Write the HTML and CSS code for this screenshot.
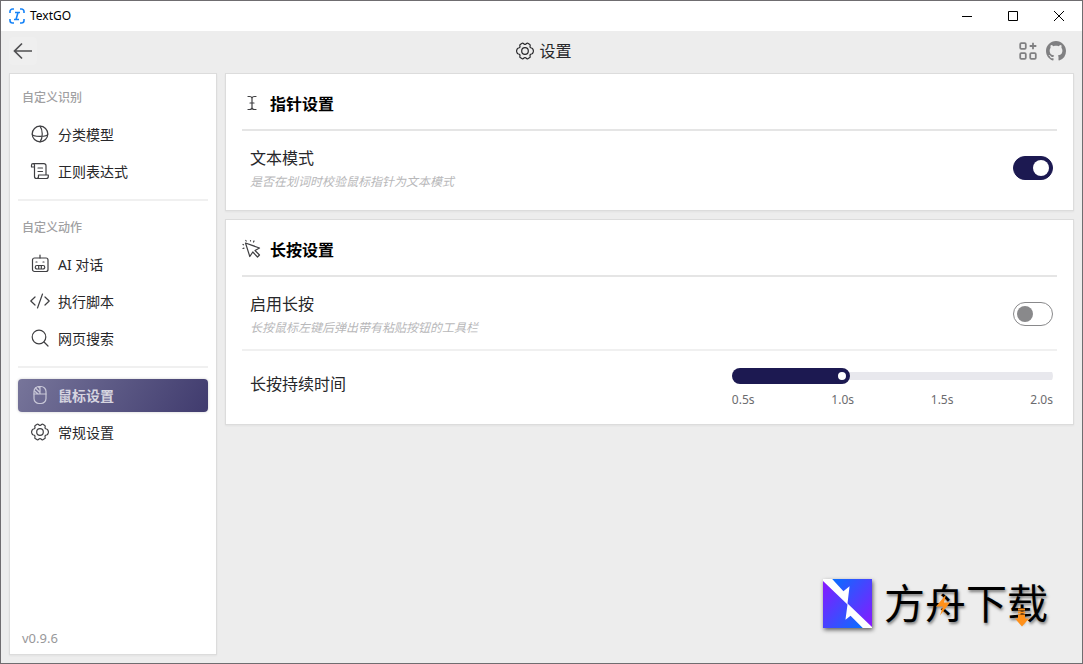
FILE: index.html
```
<!DOCTYPE html>
<html lang="zh-CN">
<head>
    <meta charset="UTF-8">
    <meta name="viewport" content="width=device-width, initial-scale=1.0">
    <title>TextGO</title>
    <link rel="stylesheet" href="styles.css">
</head>
<body>
    <div class="titlebar">
        <svg class="app-icon" viewBox="0 0 16 16">
            <path d="M1 5V3.500A2.500 2.500 0 0 1 3.500 1H5M11 1h1.500A2.500 2.500 0 0 1 15 3.500V5M15 11v1.500a2.500 2.500 0 0 1-2.500 2.500H11M5 15H3.500A2.500 2.500 0 0 1 1 12.500V11M6 4.500h5M5 11.500h5M9 4.500l-2 7"/>
        </svg>
        <span class="app-name">TextGO</span>
        <div class="window-controls">
            <button aria-label="最小化"><svg viewBox="0 0 10 10"><path d="M0 5.500h10"/></svg></button>
            <button aria-label="最大化"><svg viewBox="0 0 10 10"><path d="M.5.5h9v9h-9z"/></svg></button>
            <button aria-label="关闭"><svg viewBox="0 0 10 10"><path d="M0 0l10 10M10 0L0 10"/></svg></button>
        </div>
    </div>

    <header class="toolbar">
        <button class="back-btn" aria-label="返回">
            <svg viewBox="0 0 20 20"><path d="M19 10H1.500M9 2.500L1.500 10 9 17.500"/></svg>
        </button>
        <h1>
            <svg class="icon" viewBox="0 0 20 20"><use href="#gear"/></svg>
            设置
        </h1>
        <div class="toolbar-links">
            <a href="#extensions" aria-label="扩展">
                <svg class="extensions" viewBox="0 0 18 18"><rect x="2" y="2" width="5" height="5" rx="1"/><rect x="2" y="11" width="5" height="5" rx="1"/><rect x="11" y="11" width="5" height="5" rx="1"/><path d="M13.500 1.500v6M10.500 4.500h6"/></svg>
            </a>
            <a href="#github" aria-label="GitHub">
                <svg class="github" viewBox="0 0 16 16"><path d="M8 0C3.580 0 0 3.580 0 8c0 3.540 2.290 6.530 5.470 7.590.4.070.55-.17.55-.38 0-.19-.01-.82-.01-1.490-2.010.37-2.530-.49-2.690-.94-.09-.23-.48-.94-.82-1.130-.28-.15-.68-.52-.01-.53.63-.01 1.080.58 1.230.82.72 1.210 1.870.87 2.330.66.07-.52.28-.87.51-1.070-1.780-.2-3.640-.89-3.640-3.950 0-.87.31-1.590.82-2.150-.08-.2-.36-1.020.08-2.120 0 0 .67-.21 2.200.82.64-.18 1.320-.27 2-.27s1.360.09 2 .27c1.530-1.040 2.200-.82 2.200-.82.44 1.100.16 1.920.08 2.120.51.56.82 1.270.82 2.150 0 3.070-1.870 3.750-3.650 3.950.29.25.54.73.54 1.480 0 1.070-.01 1.930-.01 2.200 0 .21.15.46.55.38A8.010 8.010 0 0 0 16 8c0-4.420-3.580-8-8-8z"/></svg>
            </a>
        </div>
    </header>

    <div class="content">
        <aside class="sidebar">
            <nav>
                <h2>自定义识别</h2>
                <ul>
                    <li><a href="#models">
                        <svg class="icon" viewBox="0 0 20 20"><circle cx="10" cy="10" r="7.800"/><path d="M2.200 10c0 3.200 15.600 3.200 15.600 0M10 2.200c3 4 3 11.600 0 15.600"/></svg>
                        分类模型
                    </a></li>
                    <li><a href="#regex">
                        <svg class="icon" viewBox="0 0 20 20"><path d="M4.500 6H1.500V4.200a1.500 1.500 0 0 1 3 0V15.500a2 2 0 0 0 2 2M3 2.700H14a2 2 0 0 1 2 2V14M6.500 17.500a2 2 0 0 0 2-2V14h9.800v1.500a2 2 0 0 1-2 2zM8 7h4.500M8 10.500h4.500"/></svg>
                        正则表达式
                    </a></li>
                </ul>
                <hr>
                <h2>自定义动作</h2>
                <ul>
                    <li><a href="#chat">
                        <svg class="icon" viewBox="0 0 20 20"><rect x="2.500" y="4" width="15.500" height="13.500" rx="2"/><path d="M10 1v3M7 11.500h6a1.500 1.500 0 0 1 0 3.500H7a1.500 1.500 0 0 1 0-3.500zM8.700 11.500V15M11.300 11.500V15M6 8h1M13 8h1"/></svg>
                        AI 对话
                    </a></li>
                    <li><a href="#scripts">
                        <svg class="icon" viewBox="0 0 20 20"><path d="M5 6L.8 10 5 14M15 6l4.200 4-4.200 4M12.500 3l-5 14"/></svg>
                        执行脚本
                    </a></li>
                    <li><a href="#search">
                        <svg class="icon" viewBox="0 0 20 20"><circle cx="9" cy="9" r="6.800"/><path d="M14 14l4 4"/></svg>
                        网页搜索
                    </a></li>
                </ul>
                <hr>
                <ul>
                    <li><a href="#mouse" class="active">
                        <svg class="icon" viewBox="0 0 20 20"><rect x="4" y="1.500" width="12" height="17" rx="5"/><path d="M4 9h12M10 1.500V9M4.500 6L8 9M5.500 3L10 7.500M8 1.700l2 2"/></svg>
                        鼠标设置
                    </a></li>
                    <li><a href="#general">
                        <svg class="icon" viewBox="0 0 20 20">
                            <g id="gear"><circle cx="10" cy="10" r="3.300"/><path d="M7.200 2.200q.6-.3 1 .1l1.100.9q.7.300 1.400 0l1.100-.9q.4-.4 1-.1l2 1.200q.5.300.4.900l-.2 1.500q.1.700.7 1l1.400.5q.5.200.7.700l.5 1.300q.2.700 0 1.400l-.5 1.300q-.2.500-.7.700l-1.400.5q-.6.300-.7 1l.2 1.500q.1.600-.4.900l-2 1.200q-.6.300-1-.1l-1.100-.9q-.7-.3-1.400 0l-1.100.9q-.4.400-1 .1l-2-1.200q-.5-.3-.4-.9l.2-1.500q-.1-.7-.7-1l-1.400-.5q-.5-.2-.7-.7l-.5-1.300q-.2-.7 0-1.400l.5-1.300q.2-.5.7-.7l1.400-.5q.6-.3.700-1l-.2-1.500q-.1-.6.4-.9z"/></g>
                        </svg>
                        常规设置
                    </a></li>
                </ul>
            </nav>
            <span class="version">v0.9.6</span>
        </aside>

        <main>
            <section class="card">
                <h2>
                    <svg class="icon" viewBox="0 0 20 20"><path d="M6 3.500h1.500q2.500 0 2.500 2v9q0 2-2.500 2H6M14 3.500h-1.500q-2.500 0-2.500 2M10 14.500q0 2 2.500 2H14M8 10h4"/></svg>
                    指针设置
                </h2>
                <div class="row">
                    <div>
                        <label for="textMode">文本模式</label>
                        <p>是否在划词时校验鼠标指针为文本模式</p>
                    </div>
                    <input type="checkbox" id="textMode" class="toggle" checked>
                </div>
            </section>

            <section class="card">
                <h2>
                    <svg class="icon" viewBox="0 0 20 20"><path d="M3.500 4l14 5-4.500 2.500 4.500 4.500-2 2-4.700-5-3 4.500zM8.500 1.500V2M12 2l-.5 1M3.800 1.500l.4.500M1 5.500l.5.300M1 9.500l1-.4"/></svg>
                    长按设置
                </h2>
                <div class="row">
                    <div>
                        <label for="longPress">启用长按</label>
                        <p>长按鼠标左键后弹出带有粘贴按钮的工具栏</p>
                    </div>
                    <input type="checkbox" id="longPress" class="toggle">
                </div>
                <div class="row duration">
                    <label for="duration">长按持续时间</label>
                    <div class="slider">
                        <input type="range" id="duration" min="0.5" max="2" step="0.1" value="1" style="--value: 0.3333">
                        <div class="ticks">
                            <span>0.5s</span>
                            <span>1.0s</span>
                            <span>1.5s</span>
                            <span>2.0s</span>
                        </div>
                    </div>
                </div>
            </section>
        </main>
    </div>

    <div class="watermark">
        <svg class="watermark-logo" viewBox="0 0 48 48">
            <defs>
                <linearGradient id="left" x1="0" y1="0" x2="1" y2="1"><stop offset="0" stop-color="#8a17ff"/><stop offset="1" stop-color="#086fff"/></linearGradient>
                <linearGradient id="right" x1="0" y1="0" x2="1" y2="1"><stop offset="0" stop-color="#086fff"/><stop offset="1" stop-color="#8a17ff"/></linearGradient>
            </defs>
            <path fill="#fff" d="M0 0h48v48H0z"/>
            <path fill="url(#left)" d="M0 2l24 23-2 15 5-4 12 12H0z"/>
            <path fill="url(#right)" d="M9 0h39v47L24 24l2-17-6 5z"/>
        </svg>
        <span class="watermark-text">方舟下载</span>
        <svg class="watermark-marks" viewBox="0 0 164 48">
            <path d="M62 15L52 27h7l-3 9 10-13h-6z"/>
            <path d="M134 29h7v2h-7zM134 32h7v2h-7zM134 35h7v4h4l-7 8-7-8h3z"/>
        </svg>
    </div>

    <script>
        const duration = document.getElementById('duration');

        duration.oninput = () => {
            const value = (duration.value - duration.min) / (duration.max - duration.min);
            duration.style.setProperty('--value', value);
        };
    </script>
</body>
</html>
```
FILE: styles.css
```
* {
    box-sizing: border-box;
}

body {
    font-family: "Noto Sans", "Noto Sans CJK SC", sans-serif;
    font-size: 14px;
    color: #27272a;
    margin: 0;
    height: 100vh;
    display: flex;
    flex-direction: column;
    background-color: #ededed;
    border: 1px solid #6f6d70;
}

h1, h2, p, ul {
    margin: 0;
    padding: 0;
}

button {
    padding: 0;
    border: none;
    background: none;
}

svg {
    display: block;
    fill: none;
    stroke: currentColor;
}

.icon {
    width: 20px;
    height: 20px;
    flex-shrink: 0;
    stroke-width: 1.2;
    stroke-linecap: round;
    stroke-linejoin: round;
}

.titlebar {
    display: flex;
    align-items: center;
    height: 30px;
    padding-left: 8px;
    background-color: white;
    color: black;
}

.app-icon {
    width: 16px;
    height: 16px;
    color: #1683f7;
    stroke-width: 1.6;
}

.app-name {
    margin-left: 5px;
    padding-bottom: 2px;
    font-size: 12px;
}

.window-controls {
    display: flex;
    margin-left: auto;
}

.window-controls button {
    display: flex;
    align-items: center;
    justify-content: center;
    width: 46px;
    height: 30px;
    color: black;
}

.window-controls svg {
    width: 10px;
    height: 10px;
}

.toolbar {
    display: grid;
    grid-template-columns: 1fr auto 1fr;
    align-items: center;
    height: 42px;
    padding: 0 16px 2px 8px;
}

.back-btn {
    display: flex;
    align-items: center;
    justify-content: center;
    width: 28px;
    height: 28px;
    border-radius: 4px;
    background-color: #efefef;
    color: #505052;
}

.back-btn svg {
    width: 20px;
    height: 20px;
    stroke-width: 1.7;
}

.toolbar h1 {
    display: flex;
    align-items: center;
    gap: 4px;
    padding-left: 12px;
    font-size: 16px;
    font-weight: 400;
    line-height: 22px;
}

.toolbar-links {
    display: flex;
    align-items: center;
    justify-content: flex-end;
    gap: 8px;
}

.toolbar-links a {
    color: #808082;
}

.extensions {
    width: 20px;
    height: 20px;
    stroke-width: 1.6;
}

.github {
    width: 20px;
    height: 20px;
    fill: currentColor;
    stroke: none;
}

.content {
    display: flex;
    flex: 1;
    gap: 8px;
    min-height: 0;
    padding: 0 8px 8px;
}

.sidebar, .card {
    background-color: white;
    border: 1px solid #dcdcdc;
    box-shadow: 0 1px 2px rgba(0, 0, 0, 0.05);
}

.sidebar {
    display: flex;
    flex-direction: column;
    justify-content: space-between;
    width: 208px;
    padding: 8px 8px 7px;
}

.sidebar h2 {
    margin-bottom: 4px;
    padding-left: 4px;
    color: #a0a0a2;
    font-size: 12px;
    font-weight: 500;
    line-height: 32px;
}

.sidebar ul {
    display: flex;
    flex-direction: column;
    gap: 4px;
    list-style-type: none;
}

.sidebar li a {
    display: flex;
    align-items: center;
    gap: 8px;
    height: 33px;
    padding: 0 12px 1px;
    border-radius: 4px;
    color: inherit;
    text-decoration: none;
}

.sidebar .icon {
    color: #3f3f42;
}

.sidebar li a.active {
    background: linear-gradient(120deg, #77759a, #5b5884 50%, #403b6e);
    box-shadow: 0 0 3px rgba(0, 0, 0, 0.2);
    color: #d6d5e0;
    font-weight: 600;
}

.sidebar .active .icon {
    color: #c9c8d8;
}

.sidebar hr {
    height: 2px;
    margin: 11px 0;
    border: none;
    background-color: #f0f0f0;
}

.version {
    padding-left: 4px;
    color: #98989a;
    font-size: 13px;
    line-height: 18px;
}

main {
    flex: 1;
    display: flex;
    flex-direction: column;
    gap: 8px;
}

.card {
    padding: 0 16px 5px;
}

.card h2 {
    display: flex;
    align-items: center;
    gap: 8px;
    height: 57px;
    padding-bottom: 2px;
    padding-top: 4px;
    border-bottom: 2px solid #e5e5e5;
    color: black;
    font-size: 16px;
    font-weight: 600;
}

.card h2 .icon {
    color: #3f3f42;
}

.row {
    display: flex;
    align-items: center;
    justify-content: space-between;
    padding: 15px 4px 15px 8px;
}

.row label {
    display: block;
    font-size: 16px;
    line-height: 24px;
}

.row p {
    color: #b8b8ba;
    font-size: 12px;
    font-style: italic;
    line-height: 16px;
    padding-top: 4px;
}

.duration {
    padding-top: 9px;
    padding-bottom: 11px;
    border-top: 2px solid #f0f0f0;
    margin-top: -2px;
}

.toggle {
    appearance: none;
    width: 40px;
    height: 24px;
    margin: 0;
    padding: 3px;
    border: 1px solid #89898b;
    border-radius: 12px;
}

.toggle::before {
    content: "";
    display: block;
    width: 16px;
    height: 16px;
    border-radius: 50%;
    background-color: #89898b;
}

.toggle:checked {
    border-color: #1c1951;
    background-color: #1c1951;
}

.toggle:checked::before {
    margin-left: auto;
    background-color: white;
}

.slider {
    width: 40%;
    padding-top: 8px;
}

.slider input {
    appearance: none;
    display: block;
    width: 100%;
    height: 16px;
    margin: 0;
    border-radius: 8px;
    background:
        linear-gradient(#1c1951, #1c1951) left / calc((100% - 16px) * var(--value) + 8px) 16px no-repeat,
        linear-gradient(#e8e8ed, #e8e8ed) left / 100% 8px no-repeat;
}

.slider input::-webkit-slider-thumb {
    appearance: none;
    width: 16px;
    height: 16px;
    border: 4px solid #1c1951;
    border-radius: 50%;
    background-color: white;
}

.ticks {
    display: flex;
    justify-content: space-between;
    margin-top: 8px;
    color: #6b6b6e;
    font-size: 12px;
    line-height: 16px;
}

.watermark {
    position: absolute;
    right: 35px;
    bottom: 36px;
    display: flex;
    align-items: center;
    gap: 12px;
    color: black;
}

.watermark-logo {
    width: 49px;
    height: 49px;
    stroke: none;
    filter: drop-shadow(1px 2px 2px rgba(0, 0, 0, 0.6));
}

.watermark-text {
    font-size: 41px;
    font-weight: 400;
    line-height: 49px;
    text-shadow: 1px 2px 3px rgba(0, 0, 0, 0.5);
}

.watermark-marks {
    position: absolute;
    right: 0;
    top: 0;
    width: 164px;
    height: 49px;
    fill: #ff9019;
    stroke: none;
}
```
